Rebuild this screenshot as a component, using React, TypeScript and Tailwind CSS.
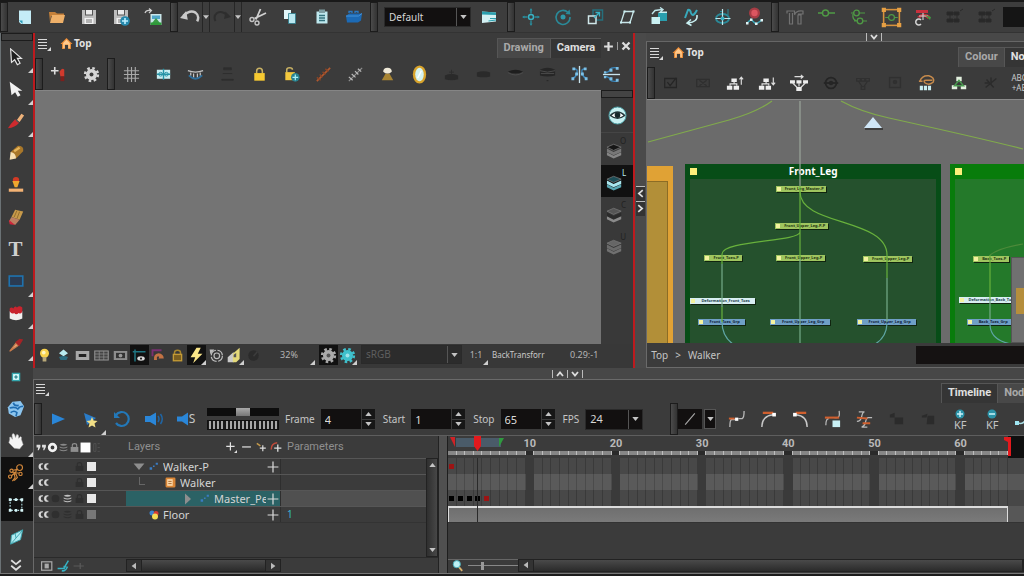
import React from "react";

type Kids = { children?: React.ReactNode };

/* ---------- basic parts ---------- */

function Ic({ children, size = 20 }: Kids & { size?: number }) {
  return (
    <svg viewBox="0 0 20 20" width={size} height={size} fill="none" stroke="none" aria-hidden="true" className="shrink-0">
      {children}
    </svg>
  );
}

function Corner() {
  return (
    <svg viewBox="0 0 5 5" className="absolute right-0 bottom-0 h-[5px] w-[5px]" aria-hidden="true">
      <path d="M5 0V5H0Z" fill="#cfcfcf" />
    </svg>
  );
}

function Btn({
  label,
  children,
  corner,
  active,
  size = "h-8 w-8",
}: Kids & { label: string; corner?: boolean; active?: boolean; size?: string }) {
  return (
    <button
      type="button"
      aria-label={label}
      className={`relative flex shrink-0 items-center justify-center ${size} ${active ? "bg-[#111]" : ""}`}
    >
      {children}
      {corner && <Corner />}
    </button>
  );
}

function Handle() {
  return <div className="w-2 shrink-0 self-stretch border border-[#1c1c1c] bg-linear-to-r from-[#4b4b4b] to-[#333]" />;
}

function Caret({ up }: { up?: boolean }) {
  return (
    <svg viewBox="0 0 8 5" className="h-[4px] w-[7px]" aria-hidden="true">
      <path d={up ? "M0 5L4 0L8 5Z" : "M0 0L4 5L8 0Z"} fill="#c4c4c4" />
    </svg>
  );
}

function Drop({ label, value, box, dim }: { label: string; value: string; box: string; dim?: boolean }) {
  return (
    <span className={`relative flex shrink-0 border border-[#2a2a2a] ${box}`}>
      <select
        aria-label={label}
        defaultValue={value}
        className={`h-full w-full appearance-none pl-1 outline-none ${
          dim ? "bg-[#2c2c2c] text-[#5e5e5e]" : "bg-[#121010] text-[#d6d6d6]"
        }`}
      >
        <option value={value}>{value}</option>
      </select>
      <span
        className={`pointer-events-none absolute inset-y-0 right-0 flex w-[14px] items-center justify-center border-l border-[#555] ${
          dim ? "bg-[#2c2c2c]" : "bg-[#121010]"
        }`}
      >
        <Caret />
      </span>
    </span>
  );
}

function Spin({ label, value }: { label: string; value: string }) {
  return (
    <div className="flex items-center">
      <label htmlFor={`spin-${label}`} className="pr-[6px]">
        {label}
      </label>
      <input
        id={`spin-${label}`}
        defaultValue={value}
        className="h-5 w-10 bg-[#121010] pl-1 text-[11px] text-[#dcdcdc] outline-none"
      />
      <span className="ml-px flex h-5 w-[13px] flex-col gap-px">
        <button type="button" aria-label={`${label} up`} className="flex flex-1 items-center justify-center bg-[#161616]">
          <Caret up />
        </button>
        <button type="button" aria-label={`${label} down`} className="flex flex-1 items-center justify-center bg-[#161616]">
          <Caret />
        </button>
      </span>
    </div>
  );
}

function MenuIcon() {
  return (
    <button type="button" aria-label="View menu" className="relative flex h-4 w-4 items-center justify-center">
      <svg viewBox="0 0 14 14" className="h-[14px] w-[14px]" aria-hidden="true">
        <path d="M1 2.5H10M1 5.5H10M1 8.5H10M1 11.5H10" stroke="#d8d8d8" strokeWidth="1.2" />
        <path d="M14 10V14H10Z" fill="#d8d8d8" />
      </svg>
    </button>
  );
}

function Home() {
  return (
    <svg viewBox="0 0 14 14" className="h-[13px] w-[13px]" aria-hidden="true">
      <path d="M7 1L13.5 7.5H11.8V13H8.8V8.5H5.2V13H2.2V7.5H0.5Z" fill="#e98a35" />
      <path d="M7 2.6L10.6 6.4V12H8.9V8H5.1V12H3.4V6.4Z" fill="#ffc98c" />
    </svg>
  );
}

function Tab({ children, on }: Kids & { on?: boolean }) {
  return (
    <button
      type="button"
      className={`h-5 shrink-0 border-t border-l border-[#565656] px-[6px] font-[Roboto,sans-serif] text-[11px] font-bold whitespace-nowrap ${
        on ? "bg-[#353535] text-[#e0e0e0]" : "bg-[#484848] text-[#a9a9a9]"
      }`}
    >
      {children}
    </button>
  );
}

function SplitArrows({ down }: { down?: boolean }) {
  return (
    <span className="flex h-2 gap-[3px] border-x border-[#bbb] px-[3px]">
      {!down && (
        <svg viewBox="0 0 8 8" className="h-2 w-2">
          <path d="M1 6L4 2.5L7 6" stroke="#ddd" strokeWidth="1.8" fill="none" />
        </svg>
      )}
      {!down && <span className="w-px bg-[#bbb]" />}
      <svg viewBox="0 0 8 8" className="h-2 w-2">
        <path d="M1 2L4 5.5L7 2" stroke="#ddd" strokeWidth="1.8" fill="none" />
      </svg>
    </span>
  );
}

/* ---------- top toolbar ---------- */

const floppy = (
  <>
    <path d="M3 3H17V17H3Z" fill="#bdbdbd" />
    <path d="M6 3H14V8.5H6Z" fill="#555" />
    <path d="M7 3H13V7.5H7Z" fill="#e9e9e9" />
    <path d="M5.5 11H14.5V17H5.5Z" fill="#f1f1f1" />
    <path d="M7 13H13M7 15H13" stroke="#777" />
  </>
);

function TopBar() {
  return (
    <div role="toolbar" aria-label="Main" className="flex h-[33px] shrink-0 items-center overflow-hidden border-t-2 border-b border-t-[#191919] border-b-[#333] bg-[#3d3d3d]">
      <Handle />
      <div className="flex px-px">
        <Btn label="New">
          <Ic>
            <path d="M4 3.5H16V17H6L4 15Z" fill="#c5edf7" />
            <path d="M4 13.5H7.5V17Z" fill="#2b9db9" />
          </Ic>
        </Btn>
        <Btn label="Open">
          <Ic>
            <path d="M2 5H8L10 6.5H17V9H4L3 15Z" fill="#c4803a" />
            <path d="M5 8H18L16 16H3Z" fill="#eeb069" />
          </Ic>
        </Btn>
        <Btn label="Save"><Ic>{floppy}</Ic></Btn>
        <Btn label="Save version">
          <Ic>
            {floppy}
            <circle cx="14" cy="14" r="4.8" fill="#2689ad" />
            <path d="M14 11V17M11 14H17" stroke="#c0f0ff" strokeWidth="1.6" />
          </Ic>
        </Btn>
        <Btn label="Import images">
          <Ic>
            <path d="M2 6Q3 2.5 8 3.5M6 1.5L8.5 3.5L6 6" stroke="#ccc" strokeWidth="1.2" />
            <rect x="7.5" y="7" width="11" height="11" fill="#c9e6ea" />
            <path d="M9 8.5H17V12H9Z" fill="#4fa6c8" />
            <path d="M9 16L13 11L17 16Z" fill="#3a9c46" />
            <rect x="7.5" y="15.5" width="11" height="2.5" fill="#2f9a3a" />
          </Ic>
        </Btn>
      </div>
      <Handle />
      <Btn label="Undo" size="h-8 w-6">
        <Ic size={22}>
          <path d="M4 9Q10 3 15 6Q19 9 16.5 14" stroke="#c9c9c9" strokeWidth="2.2" />
          <path d="M1 11L6.500 4.500L8 12.500Z" fill="#c9c9c9" />
        </Ic>
      </Btn>
      <Btn label="Undo list" size="h-8 w-2 border-x border-[#262626]"><Caret /></Btn>
      <Btn label="Redo" size="h-8 w-6">
        <Ic size={20}>
          <path d="M16 9Q10 3 5 6Q1 9 3.500 14" stroke="#2e2e2e" strokeWidth="2" />
          <path d="M19 10L13.500 4.500L12 12Z" fill="#2e2e2e" />
        </Ic>
      </Btn>
      <Btn label="Redo list" size="h-8 w-2 border-x border-[#262626]"><Caret /></Btn>
      <Btn label="Cut">
        <Ic>
          <path d="M12.500 2L8 12.500M18 6L6.500 11.500" stroke="#d0d0d0" strokeWidth="1.8" />
          <circle cx="4" cy="12.500" r="2" stroke="#c4c4c4" strokeWidth="1.400" />
          <circle cx="9" cy="16" r="2" stroke="#c4c4c4" strokeWidth="1.400" />
        </Ic>
      </Btn>
      <Btn label="Copy">
        <Ic>
          <path d="M4 3H11V12H4Z" fill="#e3f7fa" />
          <path d="M8.500 6.500H15.500V16.500H8.500Z" fill="#b9e7f0" stroke="#2b7c8c" strokeWidth=".8" />
        </Ic>
      </Btn>
      <Btn label="Paste">
        <Ic>
          <path d="M4.500 4.500H15.500V16.500H4.500Z" fill="#bfe8ee" />
          <path d="M7 2.500H13V6H7Z" fill="#7e9ea3" />
          <path d="M7 8.500H13M7 11H13M7 13.500H13" stroke="#33727d" strokeWidth="1.300" />
        </Ic>
      </Btn>
      <Btn label="Library">
        <Ic>
          <path d="M2 9L5 6.500H18L17 13.500L14 15.500H3Z" fill="#1c6ab5" />
          <path d="M2 9H14.500L18 6.500" stroke="#4593d8" />
          <path d="M5 6V4.500H8V6M11 6V4.500H14V6" stroke="#2a7ac4" strokeWidth="1.300" />
        </Ic>
      </Btn>
      <Handle />
      <Drop label="Workspace" value="Default" box="ml-[6px] h-5 w-[87px]" />
      <Btn label="Workspace manager" size="h-8 w-9">
        <Ic>
          <path d="M3 4.500L17 5.500V14.500L3 16Z" fill="#d3f1f3" />
          <path d="M3 4.500L17 5.500V8L3 7.500Z" fill="#2a9fae" />
          <path d="M11 11.500H17M9.500 14L17 13" stroke="#2a9fae" strokeWidth="1.200" />
        </Ic>
      </Btn>
      <Handle />
      <Btn label="Translate">
        <Ic>
          <circle cx="10" cy="10" r="2.500" stroke="#38b2c4" strokeWidth="1.500" />
          <path d="M10 2V6.500M10 13.500V18M2 10H6.500M13.500 10H18" stroke="#2a8a99" strokeWidth="1.400" />
          <path d="M8.500 3.500L10 1L11.500 3.500ZM8.500 16.500L10 19L11.500 16.500ZM3.500 8.500L1 10L3.500 11.500ZM16.500 8.500L19 10L16.500 11.500Z" fill="#2a8a99" />
        </Ic>
      </Btn>
      <Btn label="Rotate">
        <Ic>
          <path d="M15 5.500A7 7 0 1 0 17 10" stroke="#2a8a99" strokeWidth="1.600" />
          <path d="M12.500 7L17.500 7.500L16.500 2.500Z" fill="#2a8a99" />
          <circle cx="10" cy="10" r="2.500" fill="#2e9aaa" />
        </Ic>
      </Btn>
      <Btn label="Scale">
        <Ic>
          <rect x="8" y="3" width="9.500" height="10" stroke="#256f7c" strokeWidth="1.500" />
          <rect x="3.500" y="9" width="7.500" height="7.500" stroke="#d0e8ea" strokeWidth="1.500" fill="#3d3d3d" />
          <path d="M9 11L14 6M10.500 5.500H14.500V9.500" stroke="#38b2c4" strokeWidth="1.300" />
        </Ic>
      </Btn>
      <Btn label="Skew">
        <Ic>
          <path d="M7.500 4.500H16.500L13 15.500H4Z" stroke="#c9e6e9" strokeWidth="1.300" />
          <path d="M6.500 3.500h2v2h-2ZM15.500 3.500h2v2h-2ZM12 14.500h2v2h-2ZM3 14.500h2v2H3Z" fill="#c9f0f2" />
        </Ic>
      </Btn>
      <Btn label="Maintain size">
        <Ic>
          <path d="M3 7L6 3.500L13 2.500M11 .500L14 2.500L11.500 5" stroke="#bfe5e9" strokeWidth="1.400" />
          <path d="M9 6L18 5.500V14H9Z" fill="#2a9fae" />
          <path d="M9 6L11 4.500H18V6Z" fill="#c9f0f2" />
          <path d="M2.500 10H11V17H2.500Z" fill="#c9f0f2" />
        </Ic>
      </Btn>
      <Btn label="Spline offset">
        <Ic>
          <path d="M4 11L7 3Q9 2 10 6Q12 11 16 3" stroke="#38a9bb" strokeWidth="2" />
          <path d="M16 8Q17 15 7 16M10 12.500L6 16L10.500 18.500" stroke="#c9f0f2" strokeWidth="1.500" />
        </Ic>
      </Btn>
      <Btn label="Pivot">
        <Ic>
          <ellipse cx="9.500" cy="11.500" rx="6.500" ry="4.500" stroke="#2a8a99" strokeWidth="1.800" />
          <path d="M9.500 2V18M2.500 11.500H17.500" stroke="#c2e8ec" strokeWidth="1.200" />
          <path d="M15 2V8M7 4.500H9" stroke="#2a8a99" />
          <circle cx="9.500" cy="11.500" r="2" fill="#38b2c4" />
        </Ic>
      </Btn>
      <Btn label="Record">
        <Ic>
          <circle cx="9.500" cy="6" r="5.500" fill="#a63c44" />
          <circle cx="9.500" cy="6" r="3.200" fill="#dc5660" />
          <path d="M2 16L6 12.500L11 17L17 13" stroke="#38a9bb" strokeWidth="1.500" />
          <path d="M1 15h2.500v2.500H1ZM5 11.500h2.500v2.500H5ZM10 15.500h2.500v2.500H10ZM15.500 12H18v2.500h-2.500Z" fill="#dff4f6" />
        </Ic>
      </Btn>
      <Handle />
      <Btn label="Rig tools">
        <Ic>
          <path d="M2 6.500V4H9.500V7M4.500 6V17H7.500V6M13 17V8H16V17ZM9.500 8Q11 3 18 4V7H13" stroke="#727272" strokeWidth="1.200" />
        </Ic>
      </Btn>
      <Btn label="Add peg">
        <Ic><path d="M1 6H6M11 6H18" stroke="#4f9a45" strokeWidth="1.300" /><circle cx="8.500" cy="6" r="3" stroke="#4f9a45" strokeWidth="1.400" /></Ic>
      </Btn>
      <Btn label="Add parent peg">
        <Ic>
          <path d="M2 6H5M10 6H16M5 14H8M14 14H18M4 7Q3 13 8 14" stroke="#4f9a45" strokeWidth="1.200" />
          <circle cx="7.500" cy="6" r="2.800" stroke="#4f9a45" strokeWidth="1.300" />
          <circle cx="11" cy="14" r="2.800" stroke="#4f9a45" strokeWidth="1.300" />
        </Ic>
      </Btn>
      <Btn label="Select group">
        <Ic size={21}>
          <rect x="2.500" y="2.500" width="15" height="15" stroke="#d8923c" strokeWidth="1.500" />
          <path d="M.7.7h4v4h-4ZM15.300.7h4v4h-4ZM.7 15.300h4v4h-4ZM15.300 15.300h4v4h-4Z" fill="#e6a045" />
          <path d="M4 10H7M13 10H16" stroke="#4f9a45" />
          <circle cx="10" cy="10" r="2.800" stroke="#4f9a45" strokeWidth="1.200" />
        </Ic>
      </Btn>
      <Btn label="Deform chain">
        <Ic>
          <path d="M3 3H15V6H3Z" fill="#c8303d" />
          <path d="M4 10Q10 4 17 9L15 12Q11 8 7 11Z" fill="#c8303d" />
          <path d="M10 6V13M6 9L15 9" stroke="#c9c9c9" strokeWidth="1.200" />
          <path d="M12 8L18 10L17 13Z" fill="#3f9a45" />
          <path d="M8 13A3 3 0 1 0 8 17" stroke="#d5d5d5" strokeWidth="1.500" />
        </Ic>
      </Btn>
      {["Show controls", "Hide controls"].map((l) => (
        <Btn key={l} label={l}>
          <Ic>
            <path d="M2 5H8V8H2ZM9 5H14V8H9ZM2 12H8V15H2ZM9 12H14V15H9ZM5 8V12M12 8V12M15 4L18 2" fill="#282828" stroke="#2b2b2b" />
          </Ic>
        </Btn>
      ))}
      <input aria-label="Search command" className="h-5 min-w-5 flex-1 bg-[#151515]" />
    </div>
  );
}

/* ---------- left tools ---------- */

const tools: { label: string; corner?: boolean; active?: boolean; art: React.ReactNode }[] = [
  { label: "Select", corner: true, art: <path d="M4 1L16 11.500H11.500L14.500 17L11.500 18.500L8.500 13L5 16Z" fill="#1d1d1d" stroke="#e5e5e5" strokeWidth="1.300" /> },
  { label: "Contour editor", corner: true, art: <path d="M3 2L17 12H12L15 17L12 18.500L9 13.500L5 17Z" fill="#f2f2f2" /> },
  {
    label: "Brush", corner: true, art: (
      <><path d="M11 9L16 2L19 4L14 11Z" fill="#eeb27a" /><path d="M9 8L13.500 12Q9 17.500 1 18Q4 13 9 8Z" fill="#cf2a2e" /><path d="M10 9L13 11.500" stroke="#555" strokeWidth="1.500" /></>
    ),
  },
  {
    label: "Pencil", art: (
      <><path d="M4 9L12 2Q19 2 18 8L10 16Z" fill="#a8772a" /><path d="M8 8L14 4" stroke="#e6b55b" strokeWidth="2.500" /><path d="M4 9Q10 10 10 16L3 17.500Z" fill="#f7e0b2" /></>
    ),
  },
  {
    label: "Stamp", art: (
      <><circle cx="10" cy="4.500" r="3.500" fill="#d33a25" /><path d="M6 5.500H14L11.500 12.500H8.500Z" fill="#f0a72f" /><path d="M2 14H18V17.500H2Z" fill="#f3b274" /></>
    ),
  },
  {
    label: "Eraser", art: (
      <><path d="M9 2L18 4L14 13L5 10Z" fill="#c79a4a" /><path d="M11 3L8 10M14 4L11 12" stroke="#8f6a2b" /><path d="M5 10L14 13L9 19L2 15Z" fill="#bb8062" /><path d="M2 13L9 19L3 18Z" fill="#d0253a" /></>
    ),
  },
  { label: "Text", art: null },
  { label: "Rectangle", corner: true, art: <rect x="2.500" y="4.500" width="15" height="11" fill="#2b3b52" stroke="#1f72ae" strokeWidth="1.800" /> },
  {
    label: "Paint", corner: true, art: (
      <><path d="M3 8H17V16Q10 20 3 16Z" fill="#efefef" /><path d="M3 5Q5 3 7 5Q9 1 11 4Q14 1 17 4V8Q16 12 13 10Q10 13 8 10Q5 12 3 8Z" fill="#c8242e" /></>
    ),
  },
  {
    label: "Dropper", corner: true, art: (
      <><path d="M3 17L10 8L12.500 10.500Z" fill="#e8a77a" stroke="#c97b4c" strokeWidth="1.500" /><path d="M9 7L14 3L18 4L13.500 11.500Z" fill="#a52326" /></>
    ),
  },
  {
    label: "Pivot", art: (
      <><rect x="6" y="6" width="8" height="8" fill="#d6fbfb" stroke="#35a6ad" strokeWidth="1.500" /><path d="M10 8V12M8 10H12" stroke="#1b7680" strokeWidth="1.300" /></>
    ),
  },
  {
    label: "Morphing", art: (
      <><path d="M6 2L15 1L19 7L15 17L9 19L2 15L1 8Z" fill="#8cc5ee" /><path d="M3 9Q9 7 12 10Q14 7 18 7M4 14Q8 11 11 14L10 18M7 3Q8 7 13 6" stroke="#1f6cb0" strokeWidth="1.800" /></>
    ),
  },
  {
    label: "Hand", corner: true, art: (
      <path d="M3 8Q2 5 4.500 5.500L6 8L5.500 3Q7 .500 8.500 3L9.500 6L10.500 3Q12.500 2 13 4.500L13 7L15 5Q17 5.500 16 8L18 14L14 19L8 18L2 12Z" fill="#f4f4f4" stroke="#999" strokeWidth=".6" />
    ),
  },
  {
    label: "Rigging", corner: true, active: true, art: (
      <g stroke="#d2873b" strokeWidth="1.300"><circle cx="14" cy="4" r="3.200" /><circle cx="5" cy="7.500" r="1.800" /><circle cx="15" cy="11" r="1.800" /><circle cx="3.500" cy="14" r="1.800" /><path d="M11.500 6L7 7M6 9L13 10M10.500 7L8.500 12M8.500 10L5 13M8 11L9 15L6 19M10 11L11.500 15L8 18.500" /></g>
    ),
  },
  {
    label: "Transform", active: true, art: (
      <><rect x="3.500" y="4" width="13" height="12" stroke="#b4dfe4" strokeDasharray="2 1.500" strokeWidth="1.200" /><path d="M2 2.500h3v3H2ZM15 2.500h3v3h-3ZM2 14.500h3v3H2ZM15 14.500h3v3h-3ZM8.700 2.500h2.600v3H8.700ZM8.700 14.500h2.600v3H8.700Z" fill="#d7f6f8" /></>
    ),
  },
  {
    label: "Quick select", art: (
      <><path d="M17.500 2L15 13L4 18L5 8Z" fill="#aeeaf0" stroke="#38a1ac" /><path d="M17 3L4.500 17.500M9 6L10 11" stroke="#38a1ac" /></>
    ),
  },
];

function LeftTools() {
  return (
    <nav aria-label="Tools" className="flex w-[33px] shrink-0 flex-col overflow-hidden border-l border-[#6b7275] bg-[#3b3b3b]">
      <div className="h-2 shrink-0 border border-[#1c1c1c] bg-[#3f3f3f]" />
      {tools.map((t) => (
        <Btn key={t.label} label={t.label} corner={t.corner} active={t.active} size="h-8 w-full pr-[3px]">
          {t.art ? (
            <Ic size={18}>{t.art}</Ic>
          ) : (
            <span className="font-[Liberation_Serif,serif] text-[21px] leading-none font-bold text-[#cfcfcf]">T</span>
          )}
        </Btn>
      ))}
      <Btn label="More tools" size="min-h-5 w-full flex-1 pr-[3px] pt-1">
        <Ic size={16}><path d="M4 4L10 9L16 4M4 11L10 16L16 11" stroke="#ddd" strokeWidth="2.200" /></Ic>
      </Btn>
    </nav>
  );
}

/* ---------- camera view ---------- */

const dimPad = (y: number) => <path d={`M3 ${y}Q10 ${y - 3} 17 ${y}V${y + 4}Q10 ${y + 6} 3 ${y + 4}Z`} fill="#2a2a2a" />;

const cameraTools: { label: string; art: React.ReactNode }[] = [
  { label: "Grid", art: <path d="M6 2V18M10 2V18M14 2V18M2 6H18M2 10H18M2 14H18" stroke="#a9a9a9" strokeWidth="1.200" /> },
  { label: "Safe area", art: <><rect x="3" y="5" width="14" height="9.500" fill="#c8eef2" /><path d="M10 4V15.500M3 9.700H17" stroke="#2593a6" strokeWidth="1.500" /><circle cx="7" cy="9.700" r="2" stroke="#2593a6" /><circle cx="13" cy="9.700" r="2" stroke="#2593a6" /></> },
  { label: "Onion skin", art: <><path d="M2 6Q10 9 18 6" stroke="#c4c4c4" strokeWidth="1.500" /><path d="M3 11Q10 18 17 11" stroke="#2d6e9c" strokeWidth="2" /><path d="M5 8V11M8 9V13M12 9V13M15 8V11" stroke="#c4c4c4" strokeWidth="1.300" /></> },
  { label: "Onion markers", art: <path d="M6 3H14V5H6ZM5 9H15M4 15H16V16H4Z" stroke="#2e2e2e" fill="#2e2e2e" /> },
  { label: "Lock", art: <><path d="M7 9V6.500Q7 3.500 10 3.500Q13 3.500 13 6.500V9" stroke="#c9b264" strokeWidth="1.600" /><rect x="4.500" y="8.500" width="11" height="8" fill="#f6c931" /></> },
  { label: "Unlock all", art: <><path d="M5 8V5Q5 3 8 3Q11 3 11 5" stroke="#c9b264" strokeWidth="1.600" /><rect x="3.500" y="7.500" width="10" height="8.500" fill="#f3c83e" /><circle cx="14" cy="13" r="4.500" fill="#27808e" /><path d="M14 10V16M11 13H17" stroke="#a8f0f8" strokeWidth="1.300" /></> },
  { label: "Ruler", art: <><path d="M3 17L17 3" stroke="#b0582f" strokeWidth="1.800" /><path d="M3 13L7 16M6 10L9 13M9 7L12 10M12 4L15 7" stroke="#8b4526" strokeWidth="1.500" /></> },
  { label: "Guides", art: <><path d="M3 17L17 3" stroke="#8e8e8e" strokeWidth="1.300" /><path d="M3 12.500L7 16M6 9.500L10 13M9.500 6.500L13 10M12.500 4L16 7" stroke="#b9b9b9" strokeWidth="1.300" /></> },
  { label: "Light table", art: <><path d="M8 9H12L16 16H4Z" fill="#a88432" /><path d="M5.500 7Q5.500 3 10 3Q14.500 3 14.500 7Q10 11 5.500 7Z" fill="#efe9d8" /></> },
  { label: "Mirror", art: <><ellipse cx="10" cy="10" rx="7" ry="9.500" fill="#d9a42c" /><ellipse cx="10" cy="10" rx="4.500" ry="7" fill="#d4f3f0" /><path d="M8 14L12 6" stroke="#fff" strokeWidth="1.500" /></> },
  { label: "Mask 1", art: <>{dimPad(11)}<path d="M10 5V10M7.500 7.500H12.500" stroke="#2d2d2d" /></> },
  { label: "Mask 2", art: dimPad(8) },
  { label: "Mask 3", art: <><path d="M2 7Q10 3 18 7Q10 11 2 7Z" fill="#1e1e1e" /><path d="M2 8Q10 13 18 8" stroke="#4c4c4c" /></> },
  { label: "Mask 4", art: <><path d="M2 5Q10 1 18 5V11Q10 13 2 11Z" fill="#262626" /><path d="M2 6Q10 9 18 6M3 9H17" stroke="#4c4c4c" /><path d="M9 16H11V17H9Z" fill="#262626" /></> },
  { label: "Flip horizontally", art: <><path d="M10 1V19" stroke="#c9e4ee" strokeWidth="1.400" /><path d="M4 4Q9 4 7 9Q6 13 3 14M16 4Q11 4 13 9Q14 13 17 14" stroke="#3a86ba" strokeWidth="1.500" /><path d="M2.500 2.500h3v3h-3ZM14.500 2.500h3v3h-3ZM5.500 8h3v3h-3ZM11.500 8h3v3h-3ZM1.500 13h3v3h-3ZM15.500 13h3v3h-3Z" fill="#7cc0e6" /></> },
  { label: "Flip vertically", art: <><path d="M1 10H19" stroke="#c9e4ee" strokeWidth="1.400" /><path d="M16 3Q8 2 8 6Q6 8 3 8M16 17Q8 18 8 14Q6 12 3 12" stroke="#3a86ba" strokeWidth="1.500" /><path d="M14.500 2h3v3h-3ZM8 4h3v3H8ZM14.500 14.500h3v3h-3ZM8 13h3v3H8ZM2 6.500h2.500v2.500H2ZM2 11.500h2.500v2.500H2Z" fill="#7cc0e6" /></> },
];

function Layers({ top, mid, low, tag, tagColor }: { top: string; mid: string; low: string; tag: string; tagColor: string }) {
  return (
    <>
      <Ic size={19}>
        <path d="M1 13V16L8 19.500L16 16V13L8 16.500Z" fill={low} />
        <path d="M1 9V12.500L8 16L16 12.500V9L8 12.500Z" fill={mid} />
        <path d="M1 7.500L8 4.500L16 7.500L8 11Z" fill={top} stroke="#777" strokeWidth=".8" />
      </Ic>
      <span className={`absolute top-[4px] right-[7px] text-[8px] leading-none ${tagColor}`}>{tag}</span>
    </>
  );
}

function ViewBottom() {
  const s = "h-5 w-[19px]";
  const z = 15;
  return (
    <div className="flex h-6 shrink-0 items-start overflow-hidden bg-[#383838] pt-px font-[Noto_Sans,sans-serif] text-[9px] text-[#b5b5b5]">
      <Btn label="Light" size={s}><Ic size={z}><circle cx="10" cy="7" r="6" fill="#f8d24c" /><circle cx="9" cy="6" r="2.500" fill="#fff6c0" /><path d="M7.500 12H12.500V18H7.500Z" fill="#b8a878" /></Ic></Btn>
      <Btn label="Render" size={s}><Ic size={z}><path d="M10 2L16 7L10 11L4 7Z" fill="#b9ecf0" /><path d="M4 12Q10 9 16 12L14 16H6Z" fill="#2c6d80" /></Ic></Btn>
      <Btn label="Frame mask" size={s}><Ic size={z}><rect x="1" y="4" width="18" height="12" fill="#a8a8a8" /><rect x="5" y="8" width="10" height="4" fill="#222" /></Ic></Btn>
      <Btn label="Safe grid" size={s}><Ic size={z}><rect x="1" y="4" width="18" height="12" fill="#444" stroke="#8d8d8d" strokeWidth="1.500" /><path d="M1 8H19M1 12H19M7 4V16M13 4V16" stroke="#8d8d8d" /></Ic></Btn>
      <Btn label="Camera mask" size={s}><Ic size={z}><rect x="1" y="4" width="18" height="12" fill="#8d8d8d" /><rect x="4" y="6.500" width="12" height="7" fill="#333" /><circle cx="10" cy="10" r="2.500" fill="#999" /></Ic></Btn>
      <Btn label="Axis" size={s} active><Ic size={z}><path d="M4 2V18M1 5H18" stroke="#1f7480" strokeWidth="2" /><ellipse cx="12" cy="14" rx="5" ry="3" fill="#d9d9d9" /><circle cx="12" cy="14" r="1.500" fill="#222" /></Ic></Btn>
      <Btn label="Outline" size={s}><Ic size={z}><path d="M2 11V3H14" stroke="#7a2f72" strokeWidth="2.500" /><path d="M4 16Q3 8 10 7Q17 8 17 14H10Q12 11 9 11Q7 12 8 16Z" fill="#c27244" /></Ic></Btn>
      <Btn label="Lock view" size={s}><Ic size={z}><path d="M6 9V6Q6 3 10 3Q14 3 14 6V9" stroke="#a8862e" strokeWidth="2" /><rect x="4.500" y="8.500" width="11" height="8.500" stroke="#c39a35" strokeWidth="1.800" fill="#7a5e20" /></Ic></Btn>
      <Btn label="Fast render" size={s} active corner><Ic size={17}><path d="M10 1L3 12H8.500L6 19L17 8H11.500L15 1Z" fill="#fbe789" /></Ic></Btn>
      <Btn label="Preview" size={s}><Ic size={16}><circle cx="11" cy="11" r="7" stroke="#bcbcbc" strokeWidth="1.500" strokeDasharray="9 2" /><circle cx="11" cy="11" r="3.500" stroke="#bcbcbc" strokeWidth="1.500" /><path d="M2 3L8 3L3 9Z" fill="#bcbcbc" /></Ic></Btn>
      <Btn label="Matte" size={s} corner><Ic size={17}><path d="M2 18V12L9 6V18Z" fill="#c9c9c9" /><path d="M8 18V8L16 1V14L12 18Z" fill="#e4d97a" /><path d="M9 9L12 7V12H9Z" fill="#555" /></Ic></Btn>
      <Btn label="Depth" size={s}><Ic size={z}><circle cx="10" cy="10" r="7" fill="#2b2b2b" /><path d="M10 11L15 5" stroke="#3c3c3c" strokeWidth="2" /></Ic></Btn>
      <Btn label="Zoom level" size="h-5 w-[52px]" corner>32%</Btn>
      <span className="w-1" />
      <Btn label="Display gear" size={s} active><Gear c="#aaa" /></Btn>
      <Btn label="Colour gear" size={s} corner><Gear c="#3fc0cc" hole="#9fe3ea" /></Btn>
      <Drop label="Colour space" value="sRGB" box="ml-[4px] h-[19px] w-[101px] text-[10px]" dim />
      <Btn label="Reset zoom" size="h-5 w-6 ml-[2px]" corner>1:1</Btn>
      <span className="ml-[4px] flex h-5 w-[78px] items-center text-[8px] text-[#c8c8c8]">BackTransforr</span>
      <span className="flex h-5 items-center">0.29:-1</span>
    </div>
  );
}

function Gear({ c, hole = "#555" }: { c: string; hole?: string }) {
  return (
    <Ic size={17}>
      <circle cx="10" cy="10" r="7.500" stroke={c} strokeWidth="3" strokeDasharray="3 2.890" />
      <circle cx="10" cy="10" r="6.500" fill={c} />
      <circle cx="10" cy="10" r="2.300" fill={hole} />
    </Ic>
  );
}

function CameraView() {
  return (
    <section aria-label="Camera view" className="flex min-w-0 flex-[600] flex-col border-x-2 border-[#bd1a1e] bg-[#3b3b3b]">
      <header className="flex h-[25px] shrink-0 items-end">
        <div className="flex h-full flex-1 items-center gap-2 pb-1 pl-px text-[10px] font-bold text-[#e2e2e2]">
          <MenuIcon />
          <span className="flex items-center gap-px"><Home />Top</span>
        </div>
        <Tab>Drawing</Tab>
        <Tab on>Camera</Tab>
        <span className="flex h-5 w-8 items-center justify-center gap-[3px] pb-1">
          <button type="button" aria-label="Add view"><Ic size={11}><path d="M10 2V18M2 10H18" stroke="#ddd" strokeWidth="4" /></Ic></button>
          <span className="h-2 w-px bg-[#999]" />
          <button type="button" aria-label="Close view"><Ic size={10}><path d="M3 3L17 17M17 3L3 17" stroke="#ddd" strokeWidth="4.500" /></Ic></button>
        </span>
      </header>
      <div role="toolbar" aria-label="Camera tools" className="flex h-8 shrink-0 overflow-hidden">
        <Handle />
        <Btn label="Add drawing"><Ic size={19}><path d="M5 2V10M1 6H9" stroke="#ddd" strokeWidth="1.700" /><path d="M10 7Q13 2 15 5V12H11Z" fill="#d13a2d" /><path d="M11 12H15V17H11Z" fill="#7d1f1c" /></Ic></Btn>
        <Btn label="Settings"><Gear c="#d6d6d6" hole="#3b3b3b" /></Btn>
        <Handle />
        <div className="flex">
          {cameraTools.map((t) => (
            <Btn key={t.label} label={t.label}><Ic size={19}>{t.art}</Ic></Btn>
          ))}
        </div>
      </div>
      <div className="flex min-h-0 flex-1">
        <div className="flex-1 border-t border-[#858585] bg-[#747474]" />
        <div className="flex w-8 shrink-0 flex-col gap-px bg-[#393939]">
          <div className="h-2 border border-[#1c1c1c] bg-[#444]" />
          <Btn label="Visibility">
            <Ic size={19}>
              <circle cx="10" cy="10" r="9" fill="#c8f1f2" stroke="#4a9da3" />
              <path d="M2.500 10Q10 2.500 17.500 10Q10 16 2.500 10Z" fill="#fff" stroke="#26383b" strokeWidth="1.500" />
              <circle cx="10" cy="9.500" r="3" fill="#17282b" />
            </Ic>
          </Btn>
          <div className="flex flex-col border-t border-[#454545]">
            <Btn label="Overlay art" size="h-8 w-8 pr-1"><Layers top="#161616" mid="#777" low="#858585" tag="O" tagColor="text-[#222]" /></Btn>
            <Btn label="Line art" size="h-8 w-8 pr-1" active><Layers top="#1c4e57" mid="#a9e6ee" low="#5aa7b3" tag="L" tagColor="text-[#b9ecf0]" /></Btn>
            <Btn label="Colour art" size="h-8 w-8 pr-1"><Layers top="#555" mid="#2b2b2b" low="#8a8a8a" tag="C" tagColor="text-[#222]" /></Btn>
            <Btn label="Underlay art" size="h-8 w-8 pr-1"><Layers top="#666" mid="#6a6a6a" low="#707070" tag="U" tagColor="text-[#222]" /></Btn>
          </div>
        </div>
      </div>
      <ViewBottom />
    </section>
  );
}

/* ---------- node view ---------- */

type NodeBox = { text: string; pos: string; kind: "peg" | "group" | "deform" };

const nodes: NodeBox[] = [
  { text: "Front_Leg_Master-P", pos: "left-[129px] top-[86px] w-[50px]", kind: "peg" },
  { text: "Front_Upper_Leg-P-P", pos: "left-[128px] top-[123px] w-[53px]", kind: "peg" },
  { text: "Front_Toes-P", pos: "left-[57px] top-[155px] w-[38px]", kind: "peg" },
  { text: "Front_Upper_Leg-P", pos: "left-[129px] top-[155px] w-[49px]", kind: "peg" },
  { text: "Front_Upper_Leg-P", pos: "left-[216px] top-[156px] w-[49px]", kind: "peg" },
  { text: "Deformation_Front_Toes", pos: "left-[43px] top-[198px] w-[65px]", kind: "deform" },
  { text: "Front_Toes_Grp", pos: "left-[51px] top-[219px] w-[47px]", kind: "group" },
  { text: "Front_Upper_Leg_Grp", pos: "left-[123px] top-[219px] w-[60px]", kind: "group" },
  { text: "Front_Upper_Leg_Grp", pos: "left-[210px] top-[219px] w-[59px]", kind: "group" },
  { text: "Back_Toes-P", pos: "left-[326px] top-[156px] w-[36px]", kind: "peg" },
  { text: "Deformation_Back_Toes", pos: "left-[312px] top-[197px] w-[60px]", kind: "deform" },
  { text: "Back_Toes_Grp", pos: "left-[320px] top-[219px] w-[46px]", kind: "group" },
];

const kinds = {
  peg: "bg-[#9fc55f] text-[#1d3310]",
  group: "bg-[#6f9fc6] text-[#10233a]",
  deform: "bg-[#d8eef2] text-[#22404a]",
};

function NodeCanvas() {
  return (
    <div className="relative min-h-0 flex-1 overflow-hidden border-t border-[#8a8a8a] bg-[#6b6b6b]">
      <div className="absolute top-[66px] bottom-0 left-0 w-[26px] bg-[#e0a235]">
        <div className="mt-[15px] h-full w-[21px] border-t border-r border-[#8c6c25] bg-[#b28f38]" />
      </div>
      <div className="absolute top-[64px] bottom-0 left-[38px] w-[256px] bg-[#074d17] px-[5px]">
        <div className="flex h-[15px] items-center">
          <span className="h-[7px] w-[7px] bg-[#fdf07a]" />
          <span className="flex-1 pr-[7px] text-center text-[10px] font-bold text-white">Front_Leg</span>
        </div>
        <div className="h-full bg-[#25512d]" />
      </div>
      <div className="absolute top-[64px] right-0 bottom-0 left-[303px] bg-[#087c0b] pl-[5px]">
        <div className="flex h-[15px] items-center"><span className="h-[7px] w-[7px] bg-[#fdf07a]" /></div>
        <div className="h-full bg-[#24792a]" />
      </div>
      {nodes.map((n, i) => (
        <div
          key={i}
          className={`absolute flex h-[6px] items-center gap-px overflow-hidden pl-px text-[4px] leading-none font-bold whitespace-nowrap shadow-[1px_1px_0_#10240f] ${n.pos} ${kinds[n.kind]}`}
        >
          <span className="h-1 w-1 shrink-0 bg-[#f4f3a0]" />
          <span className="flex-1 text-center">{n.text}</span>
        </div>
      ))}
      <svg viewBox="648 98 376 246" className="absolute top-0 left-0 h-[246px] w-[376px]" fill="none" strokeWidth="1.200" aria-hidden="true">
        <path d="M649 140Q690 129 730 118Q758 110 773 99" stroke="#80aa4c" />
        <path d="M842 99Q862 110 890 116Q985 137 1024 147" stroke="#80aa4c" />
        <path d="M801 99V184" stroke="#9aa59a" />
        <path d="M874 115L883 126H865Z" fill="#cfe6f7" />
        <path d="M866 127H884" stroke="#222" />
        <g stroke="#68b13c">
          <path d="M801 184V257M801 230C800 240 723 238 723 252V262M723 305V320" />
          <path d="M801 190C801 224 888 216 888 253V276" />
          <path d="M991 253V298" />
        </g>
        <path d="M991 253Q1000 246 1024 242" stroke="#4d8a3a" />
        <path d="M723 262V305M801 257V344M888 276V320M991 298V318" stroke="#76ab89" />
        <path d="M723 320Q723 336 737 344M888 322Q887 338 872 344M991 322Q991 338 1012 342" stroke="#5fa5a5" />
      </svg>
      <div className="absolute top-[157px] right-0 left-[364px] h-[86px] border border-r-0 border-[#555] bg-[#707070]">
        <div className="mt-[30px] ml-1 h-[26px] bg-[#b58e3c]" />
      </div>
    </div>
  );
}

const nodeTools: { label: string; art: React.ReactNode }[] = [
  { label: "Enable", art: <path d="M3 5H16V15H3ZM6 9L9 13L16 4" stroke="#262626" strokeWidth="1.400" /> },
  { label: "Disable", art: <path d="M3 6H17V14H3ZM6 7L14 13M14 7L6 13" stroke="#2f2f2f" strokeWidth="1.400" /> },
  { label: "Group up", art: <><path d="M6 5H12V9H6ZM1 13H7V17.500H1ZM8.500 13H14.500V17.500H8.500Z" fill="#eee" /><path d="M9 9V11M4.500 13V11H12V13M17 12V4M15 6L17 3.500L19 6" stroke="#ddd" strokeWidth="1.300" /></> },
  { label: "Group down", art: <><path d="M6 5H12V9H6ZM1 13H7V17.500H1ZM8.500 13H14.500V17.500H8.500Z" fill="#eee" /><path d="M9 9V11M4.500 13V11H12V13M17 4V12M15 9.500L17 12L19 9.500" stroke="#ddd" strokeWidth="1.300" /></> },
  { label: "Navigate", art: <><path d="M0 7H5.500V10.500H0ZM7.200 7H12.800V10.500H7.200ZM14.500 7H20V10.500H14.500ZM7 14.500H13V19H7Z" fill="#eee" /><path d="M3 10L8 15M17 10L12 15M10 10V14M5 3H14M12 1L14.500 3L12 5" stroke="#ddd" strokeWidth="1.300" /></> },
  { label: "Publish", art: <><circle cx="10" cy="10" r="6" stroke="#252525" strokeWidth="2" /><path d="M2 10H18" stroke="#252525" strokeWidth="2" /><circle cx="10" cy="10" r="2.500" fill="#252525" /></> },
  { label: "Unlink", art: <path d="M3 5H7V8H3ZM8 5H12V8H8ZM13 5H17V8H13ZM8 14H12V17H8ZM5 8L9 14M15 8L11 14" stroke="#303030" strokeWidth="1.300" /> },
  { label: "Frame node", art: <><rect x="4" y="4" width="12" height="11" stroke="#303030" strokeWidth="1.500" /><circle cx="10" cy="9" r="2.500" fill="#303030" /></> },
  { label: "Cable", art: <><path d="M2 8Q5 1 12 2Q19 4 17 9Q13 13 8 10Q5 7 9 7H16M1 8H5" stroke="#c58a4c" strokeWidth="1.600" /><path d="M2 13H5.500V18H2ZM6.500 13H10V18H6.500ZM11 13H14.500V18H11Z" fill="#c9eef2" /></> },
  { label: "Composite", art: <><path d="M7 3H13V8H7ZM2 12.500H8V17H2ZM12 12.500H18V17H12Z" fill="#e3f0df" /><path d="M10 7L5 13H15Z" stroke="#4a9a50" strokeWidth="1.600" /></> },
  { label: "Cut cables", art: <path d="M4 15L16 5M5 6L13 15M3 10H11M10 4V9" stroke="#2b2b2b" strokeWidth="1.600" /> },
];

function NodeView() {
  return (
    <section aria-label="Node view" className="flex min-w-0 flex-[379] flex-col">
      <div className="flex h-[9px] shrink-0 items-center justify-center border-b border-[#666] bg-[#484848] pl-[78px]">
        <SplitArrows down />
      </div>
      <div className="flex min-h-0 flex-1 flex-col border-b border-l border-[#6a6a6a] bg-[#3b3b3b]">
        <header className="flex h-[25px] shrink-0 items-end overflow-hidden">
          <div className="flex h-full flex-1 items-center gap-2 pb-1 pl-px text-[10px] font-bold text-[#e2e2e2]">
            <MenuIcon />
            <span className="flex items-center gap-px"><Home />Top</span>
          </div>
          <div className="flex w-[66px]">
            <Tab>Colour</Tab>
            <Tab on>Node View</Tab>
          </div>
        </header>
        <div role="toolbar" aria-label="Node tools" className="flex h-8 shrink-0 overflow-hidden">
          <Handle />
          {nodeTools.map((t) => (
            <Btn key={t.label} label={t.label}><Ic size={18}>{t.art}</Ic></Btn>
          ))}
          <Btn label="Rename nodes" size="h-8 w-6 flex-col">
            <span className="text-[8px] leading-[10px] text-[#ccc]">ABC</span>
            <span className="text-[8px] leading-[10px] text-[#ccc]">+AB</span>
          </Btn>
        </div>
        <NodeCanvas />
        <footer className="flex h-6 shrink-0 items-center justify-between pl-1 text-[10px] text-[#c4c4c4]">
          <nav aria-label="Breadcrumb" className="flex gap-[7px]">
            <a href="#top">Top</a>
            <span>&gt;</span>
            <a href="#walker">Walker</a>
          </nav>
          <input aria-label="Filter nodes" className="h-[18px] w-[108px] bg-[#151212]" />
        </footer>
      </div>
    </section>
  );
}

/* ---------- timeline ---------- */

const kf: { label: string; art: React.ReactNode }[] = [
  { label: "Ease", art: <><path d="M3 18Q3 10 5 10H9M12 9H16Q18 8 18 1" stroke="#b9b9b9" strokeWidth="1.400" /><path d="M2 9H8" stroke="#d0602f" strokeWidth="2" /><rect x="8.500" y="8" width="3.400" height="3.400" fill="#fff" /></> },
  { label: "Ease in", art: <><path d="M3 18Q3 6 15 5" stroke="#c9c9c9" strokeWidth="1.500" /><path d="M4 3H15" stroke="#d0602f" strokeWidth="2.400" /><rect x="14" y="3" width="3.800" height="3.800" fill="#fff" /></> },
  { label: "Ease out", art: <><path d="M17 18Q17 6 5 5" stroke="#c9c9c9" strokeWidth="1.500" /><path d="M16 3H5" stroke="#d0602f" strokeWidth="2.400" /><rect x="2.200" y="3" width="3.800" height="3.800" fill="#fff" /></> },
  { label: "Lock ease", art: <><path d="M3 16Q3 9 6 9M12 8H15Q18 8 17 1" stroke="#b9b9b9" strokeWidth="1.300" /><path d="M2 8H17" stroke="#d0602f" strokeWidth="2.200" /><rect x="10" y="11" width="8" height="7" fill="#c9f0f4" /></> },
  { label: "Ease all", art: <><path d="M4 2H10Q8 2 7 7Q6 12 2 12M18 8H14Q12 8 11 13Q10 17 7 18H13" stroke="#b9b9b9" strokeWidth="1.400" /><path d="M2 8L13 9M8 14H16" stroke="#d0602f" strokeWidth="2" /></> },
  { label: "Copy ease", art: <path d="M3 5L8 3V8H3ZM8 8H17V15H8Z" fill="#2b2b2b" /> },
  { label: "Paste ease", art: <path d="M3 6L9 4L8 8H3ZM9 6H16V15H8Z" fill="#2b2b2b" /> },
];

function Kf({ minus }: { minus?: boolean }) {
  return (
    <Btn label={minus ? "Delete keyframe" : "Add keyframe"} size="h-8 w-8 flex-col">
      <Ic size={10}>
        <circle cx="10" cy="10" r="9" fill="#2c93a8" />
        <path d={minus ? "M4 10H16" : "M4 10H16M10 4V16"} stroke="#cdf4fb" strokeWidth="3" />
      </Ic>
      <span className="text-[11px] leading-[11px] text-[#c4c4c4]">KF</span>
    </Btn>
  );
}

function Playback() {
  return (
    <div role="toolbar" aria-label="Playback" className="flex h-8 shrink-0 items-center overflow-hidden text-[10px] text-[#c6c6c6]">
      <Handle />
      <Btn label="Play"><Ic><path d="M4 4.500L17 10L4 15.500Z" fill="#2a86d8" /></Ic></Btn>
      <Btn label="Render and play" corner><Ic><path d="M4 4L16 9L7 16Z" fill="#2a7cc8" /><path d="M12 8L13.500 11.500L17.500 12L14.500 14.500L15.500 18.500L12 16.500L8.500 18.500L9.500 14.500L6.500 12L10.500 11.500Z" fill="#f2df86" /></Ic></Btn>
      <Btn label="Loop"><Ic><path d="M4 6A7 7 0 1 1 4 14" stroke="#2378b8" strokeWidth="2.200" /><path d="M2 3V9H8Z" fill="#2378b8" /></Ic></Btn>
      <Btn label="Sound"><Ic><path d="M1 7H6L12 3.500V16.500L6 13H1Z" fill="#2a86d8" /><path d="M14 7Q16 10 14 13M16.500 5Q20 10 16.500 15" stroke="#1f66a6" strokeWidth="1.500" /></Ic></Btn>
      <Btn label="Sound scrubbing">
        <svg viewBox="0 0 12 14" className="h-[14px] w-3 shrink-0" aria-hidden="true"><path d="M0 4.500H5L11 .500V13.500L5 9.500H0Z" fill="#2a86d8" /></svg>
        <span className="text-[12px] leading-none text-[#c6c6c6]">S</span>
      </Btn>
      <div className="mr-[6px] ml-[5px] flex w-[72px] shrink-0 flex-col gap-1">
        <div className="flex h-2 justify-center bg-[#0d0d0d]"><span className="h-2 w-[14px] bg-linear-to-b from-[#aaa] to-[#777]" /></div>
        <div className="flex h-[10px] justify-between border border-[#111] bg-[#1b1b1b] px-px">
          {Array.from({ length: 17 }, (_, i) => <span key={i} className="w-[2px] bg-[#a8a8a8]" />)}
        </div>
      </div>
      <div className="flex gap-2">
        <Spin label="Frame" value="4" />
        <Spin label="Start" value="1" />
        <Spin label="Stop" value="65" />
        <span className="flex items-center gap-[6px]">FPS<Drop label="FPS" value="24" box="h-[21px] w-[58px] text-[11px]" /></span>
      </div>
      <div className="ml-[27px] flex h-8 items-center">
        <Handle />
        <span className="flex h-5 w-6 items-center justify-center bg-[#121010]"><Ic size={16}><path d="M4 17L16 3" stroke="#aaa" strokeWidth="1.400" /></Ic></span>
        <button type="button" aria-label="Curve type" className="mr-1 ml-0.5 flex h-5 w-3 items-center justify-center border border-[#555] bg-[#121010]"><Caret /></button>
        {kf.map((t) => <Btn key={t.label} label={t.label}><Ic size={19}>{t.art}</Ic></Btn>)}
        <Kf />
        <Kf minus />
        <Btn label="Motion"><Ic><path d="M4 14Q10 16 12 9T19 3" stroke="#a8dce4" strokeWidth="1.500" /><rect x="1" y="12" width="4" height="4" fill="#9fe6f2" /></Ic></Btn>
      </div>
    </div>
  );
}

const eye = <path d="M9 4Q1 3 1 10Q1 17 9 16V14Q5 14 5 10Q5 6 9 6ZM19 4Q11 3 11 10Q11 17 19 16V14Q15 14 15 10Q15 6 19 6Z" fill="#d8d8d8" />;
const stack = (c: string) => <path d="M3 5Q10 1 17 5Q10 9 3 5ZM3 8Q10 12 17 8V10Q10 14 3 10ZM3 13Q10 17 17 13V15Q10 19 3 15Z" fill={c} />;
const lock = (c: string) => <><path d="M6 10V6Q6 3 10 3Q14 3 14 6V10" stroke={c} strokeWidth="2" /><rect x="3" y="9" width="14" height="9" fill={c} /></>;

function Cell({ children }: Kids) {
  return <span className="flex w-3 justify-center">{children && <Ic size={11}>{children}</Ic>}</span>;
}

function Peg() {
  return <span className="flex w-3 justify-center"><Ic size={11}><path d="M3 16h4.500v-4.500H3ZM14 3h4v4h-4ZM9 8h3v3H9Z" fill="#3a7cc2" /></Ic></span>;
}

function Tri({ open }: { open?: boolean }) {
  return <span className="flex w-3 justify-center"><Ic size={12}><path d={open ? "M1 4H19L10 15Z" : "M5 1L15 10L5 19Z"} fill="#8e8e8e" /></Ic></span>;
}

type Row = { name: string; plus: boolean; lead: React.ReactNode; on?: boolean; more?: boolean; swatch: string; param?: string };

const rows: Row[] = [
  { name: "Walker-P", plus: true, lead: <span className="flex items-center pr-1 pl-[7px]"><Tri open /><span className="w-0.5" /><Peg /></span>, swatch: "bg-[#e9e9e9]" },
  {
    name: "Walker", plus: false, swatch: "bg-[#e9e9e9]",
    lead: (
      <span className="flex items-start pr-1 pl-[13px]">
        <span className="mr-[20px] h-2 w-[6px] border-b border-l border-[#666]" />
        <Ic size={11}><rect x="1" y="1" width="18" height="18" rx="2" fill="#d98536" /><path d="M4 4H14V16H4Z" fill="#fbd9ab" /><path d="M6 8H12M6 12H12" stroke="#9b5518" strokeWidth="1.500" /></Ic>
      </span>
    ),
  },
  { name: "Master_Peg", plus: true, on: true, more: true, swatch: "bg-[#e9e9e9]", lead: <span className="flex items-center pr-1 pl-[56px]"><Tri /><span className="w-[4px]" /><Peg /></span> },
  {
    name: "Floor", plus: true, more: false, swatch: "bg-[#777]", param: "1",
    lead: <span className="flex pr-1 pl-[23px]"><Ic size={10}><circle cx="6" cy="6" r="5" fill="#3d84d0" /><circle cx="14" cy="7" r="5" fill="#d83c34" /><circle cx="12" cy="13" r="6" fill="#f5dc55" /></Ic></span>,
  },
];

function LayerPanel() {
  return (
    <div className="flex w-[404px] shrink-0 flex-col">
      <div className="flex h-[22px] shrink-0 items-center pl-[2px] font-[Roboto,sans-serif] text-[11px] text-[#8f8f8f]">
        <span className="flex w-[92px] items-center">
          <Ic size={11}><path d="M1 5H8V9L5 15H3L4 10H1ZM11 5H18V9L15 15H13L14 10H11Z" fill="#ddd" /></Ic>
          <Ic size={11}><circle cx="10" cy="10" r="6" stroke="#f2f2f2" strokeWidth="5" /></Ic>
          <Ic size={11}>{stack("#8a8a8a")}</Ic>
          <Ic size={11}>{lock("#8f8f8f")}</Ic>
          <Ic size={11}><rect x="1" y="1" width="18" height="18" fill="#fff" /></Ic>
          <Ic size={11}><path d="M5 3H9V17H5ZM12 3H16M12 10H16M12 17H16" stroke="#555" strokeWidth="1.500" /></Ic>
        </span>
        <span className="flex-1">Layers</span>
        <span className="flex w-[58px] items-center gap-[3px]">
          <Btn label="Add layer" size="h-4 w-3"><Ic size={12}><path d="M9 2V16M2 9H16" stroke="#e2e2e2" strokeWidth="2" /><path d="M20 15V20H15Z" fill="#ddd" /></Ic></Btn>
          <Btn label="Delete layer" size="h-4 w-3"><Ic size={11}><path d="M2 9H18" stroke="#e2e2e2" strokeWidth="2.200" /></Ic></Btn>
          <Btn label="Add drawing layer" size="h-4 w-3"><Ic size={12}><path d="M3 4L9 8" stroke="#c59a4c" strokeWidth="2.500" /><path d="M13 7V17M8 12H18" stroke="#ddd" strokeWidth="2" /></Ic></Btn>
          <Btn label="Add peg" size="h-4 w-3"><Ic size={12}><path d="M2 14Q2 4 12 3" stroke="#c04a3a" strokeWidth="2.500" /><path d="M13 6V18M7 12H19" stroke="#ddd" strokeWidth="2.200" /></Ic></Btn>
        </span>
        <span className="w-[155px] pl-1">Parameters</span>
      </div>
      <div className="flex min-h-0 flex-1">
        <div className="min-w-0 flex-1">
          {rows.map((r) => (
            <div key={r.name} className="flex h-[16px] items-center border-t border-[#565656] text-[10px] text-[#d4d4d4]">
              <span className="flex w-[92px] shrink-0 items-center pl-[3px]">
                <Cell>{eye}</Cell>
                <Cell>{r.more !== undefined && <circle cx="10" cy="10" r="7" fill="#2f2f2f" />}</Cell>
                <Cell>{r.more !== undefined && stack(r.more ? "#c2c2c2" : "#2f2f2f")}</Cell>
                <Cell>{lock("#2f2f2f")}</Cell>
                <span className="flex w-3 justify-center"><span className={`h-[9px] w-[9px] ${r.swatch}`} /></span>
              </span>
              <span className={`flex h-full w-[155px] shrink-0 items-center border-r border-[#2e2e2e] ${r.on ? "bg-[#2b6265]" : ""}`}>
                {r.lead}
                <span className="min-w-0 flex-1 overflow-hidden text-[11px] leading-[14px] whitespace-nowrap">{r.name}</span>
                {r.plus && <Btn label={`Expand ${r.name}`} size="h-4 w-[14px]"><Ic size={12}><path d="M10 1V19M1 10H19" stroke="#ddd" strokeWidth="2" /></Ic></Btn>}
              </span>
              <span className={`h-full flex-1 pl-[6px] leading-[15px] text-[#35b9cf] ${r.on ? "bg-[#505050]" : ""}`}>{r.param}</span>
            </div>
          ))}
          <div className="border-t border-[#333]" />
        </div>
        <div className="flex w-3 shrink-0 flex-col items-center justify-between border border-[#222] bg-linear-to-r from-[#2f2f2f] to-[#474747] py-1">
          <Caret up />
          <Caret />
        </div>
      </div>
      <div className="flex h-4 shrink-0 items-center border-t border-[#2a2a2a]">
        <span className="flex w-[92px] items-center gap-1 pl-[7px]">
          <Ic size={12}><rect x="1" y="3" width="17" height="14" stroke="#aaa" strokeWidth="2" /><path d="M6 6H13V14H6Z" fill="#aaa" /></Ic>
          <Ic size={12}><path d="M19 1L13 11M1 14H12V11L17 12Q14 19 8 18" stroke="#35b3c5" strokeWidth="2.500" /></Ic>
          <Ic size={12}><path d="M1 10H18M12 5V15" stroke="#5a5a5a" strokeWidth="2" /></Ic>
        </span>
        <HScroll box="w-[155px]" right />
      </div>
    </div>
  );
}

function HScroll({ box, right }: { box: string; right?: boolean }) {
  return (
    <span className={`flex h-[13px] items-center border border-[#222] bg-[#333] ${box}`}>
      <span className="flex w-[14px] justify-center"><Ic size={8}><path d="M15 2V18L4 10Z" fill="#bbb" /></Ic></span>
      <span className="h-full flex-1 border-x border-[#222] bg-linear-to-b from-[#4a4a4a] to-[#2b2b2b]" />
      {right && <span className="flex w-[14px] justify-center"><Ic size={8}><path d="M5 2V18L16 10Z" fill="#bbb" /></Ic></span>}
    </span>
  );
}

const frames = Array.from({ length: 65 }, (_, i) => i + 1);

function Track({ tone, marks = {} }: { tone: "dark" | "light"; marks?: Record<number, string> }) {
  const fill = tone === "dark" ? "bg-[#484848] border-[#3a3a3a]" : "bg-[#5a5a5a] border-[#4b4b4b]";
  return (
    <div className="flex h-4">
      <div className="grid w-[560px] shrink-0 grid-cols-[repeat(65,minmax(0,1fr))]">
        {frames.map((f) => (
          <span key={f} className={`flex items-center justify-center border-r ${f % 10 === 0 ? "border-[#3a3a3a] bg-[#3a3a3a]" : fill}`}>
            {marks[f] && <span className={`h-[5px] w-[5px] shrink-0 ${marks[f]}`} />}
          </span>
        ))}
      </div>
      <span className={`flex-1 ${tone === "dark" ? "bg-[#474747]" : "bg-[#575757]"}`} />
    </div>
  );
}

function Tracks() {
  return (
    <div className="relative flex min-w-0 flex-1 flex-col overflow-hidden border-l border-[#1e1e1e]">
      <div className="flex h-[22px] shrink-0">
        <div className="relative w-[560px] shrink-0">
          <div className="grid h-[15px] grid-cols-[repeat(65,minmax(0,1fr))]">
            {frames.map((f) => (
              <span key={f} className="flex items-center justify-center font-[Roboto,sans-serif] text-[11px] font-bold text-[#b9b9b9]">
                {f % 10 === 0 && <span className="shrink-0">{f}</span>}
              </span>
            ))}
          </div>
          <div className="grid h-[4px] grid-cols-[repeat(65,minmax(0,1fr))]">
            {frames.map((f) => (
              <span key={f} className={`border-r border-[#bdbdbd] ${f % 10 === 0 ? "bg-[#2a2a2a]" : "bg-[#868686]"}`} />
            ))}
          </div>
          <span className="absolute top-[2px] left-[8px] h-[9px] w-[45px] bg-[#4a5b69]" />
          <svg viewBox="0 0 60 20" className="absolute top-0 left-0 h-5 w-[60px]" aria-hidden="true">
            <path d="M2 1H7V11Z" fill="#cf2226" />
            <path d="M26 0H33V10L29.500 15L26 10Z" fill="#e3191d" />
            <path d="M51 2H56L51 11Z" fill="#2f9a3f" />
          </svg>
        </div>
        <div className="flex flex-1 bg-[#0f0f0f]">
          <svg viewBox="0 0 10 20" className="-ml-1 h-5 w-[10px]" aria-hidden="true"><path d="M0 1H7V20H4V6L0 4Z" fill="#e3191d" /></svg>
        </div>
      </div>
      <div className="relative">
        <Track tone="dark" marks={{ 1: "bg-[#9c1414]" }} />
        <Track tone="light" />
        <Track tone="dark" marks={{ 1: "bg-black", 2: "bg-black", 3: "bg-black", 4: "bg-black", 5: "bg-[#9c1414]" }} />
        <div className="flex h-4">
          <div className="w-[560px] shrink-0 border-x border-t-2 border-[#dcdcdc] bg-linear-to-b from-[#6f6f6f] to-[#7a7a7a]" />
          <span className="flex-1 bg-[#575757]" />
        </div>
        <span className="absolute top-0 bottom-0 left-[29px] w-px bg-[#2a2a2a]" />
      </div>
      <div className="flex-1 border-t border-[#333]" />
      <div className="flex h-4 shrink-0 items-center">
        <span className="flex w-[70px] items-center border-t border-[#666] pl-1">
          <Ic size={12}><path d="M11 11L17 18" stroke="#d8b16c" strokeWidth="3" /><circle cx="8" cy="7" r="6" fill="#bdf0f4" stroke="#3fa9b5" strokeWidth="1.500" /></Ic>
          <span className="relative ml-1 flex h-3 flex-1 items-center">
            <span className="h-px flex-1 bg-[#888]" />
            <span className="absolute top-0.5 left-[13px] h-2 w-[3px] bg-[#999]" />
          </span>
        </span>
        <HScroll box="min-w-0 flex-1" />
      </div>
    </div>
  );
}

function Timeline() {
  return (
    <section aria-label="Timeline" className="flex h-[194px] shrink-0 flex-col border-t border-l border-[#6a6a6a] bg-[#3b3b3b]">
      <header className="flex h-[23px] shrink-0 items-start justify-between overflow-hidden">
        <div className="mt-px"><MenuIcon /></div>
        <div className="mt-[3px] flex w-[83px]">
          <Tab on>Timeline</Tab>
          <Tab>Node Library</Tab>
        </div>
      </header>
      <Playback />
      <div className="flex min-h-0 flex-1 border-t border-[#5e5e5e]">
        <LayerPanel />
        <div className="w-[9px] shrink-0 border-l border-[#222] bg-[#505050]" />
        <Tracks />
      </div>
    </section>
  );
}

export default function App() {
  return (
    <div className="flex h-screen flex-col overflow-hidden bg-[#474747] font-[Noto_Sans,sans-serif] text-[10px] text-[#d0d0d0]">
      <TopBar />
      <div className="flex min-h-0 flex-1">
        <LeftTools />
        <main className="flex min-w-0 flex-1 flex-col">
          <div className="flex min-h-0 flex-1">
            <CameraView />
            <div className="flex w-[11px] shrink-0 flex-col items-center justify-center bg-[#4a4a4a]">
              {["M6 1L2.500 4L6 7", "M2 1L5.500 4L2 7"].map((d) => (
                <span key={d} className="flex h-[15px] w-[9px] items-center justify-center border-t border-[#bbb] bg-[#333]">
                  <svg viewBox="0 0 8 8" className="h-[9px] w-[9px]"><path d={d} stroke="#ddd" strokeWidth="1.500" fill="none" /></svg>
                </span>
              ))}
            </div>
            <NodeView />
          </div>
          <div className="flex h-[11px] shrink-0 items-center justify-center bg-[#474747] pl-[78px]">
            <SplitArrows />
          </div>
          <Timeline />
        </main>
      </div>
      <div className="h-[3px] shrink-0 border-t border-[#777] bg-[#1c1c1c]" />
    </div>
  );
}
